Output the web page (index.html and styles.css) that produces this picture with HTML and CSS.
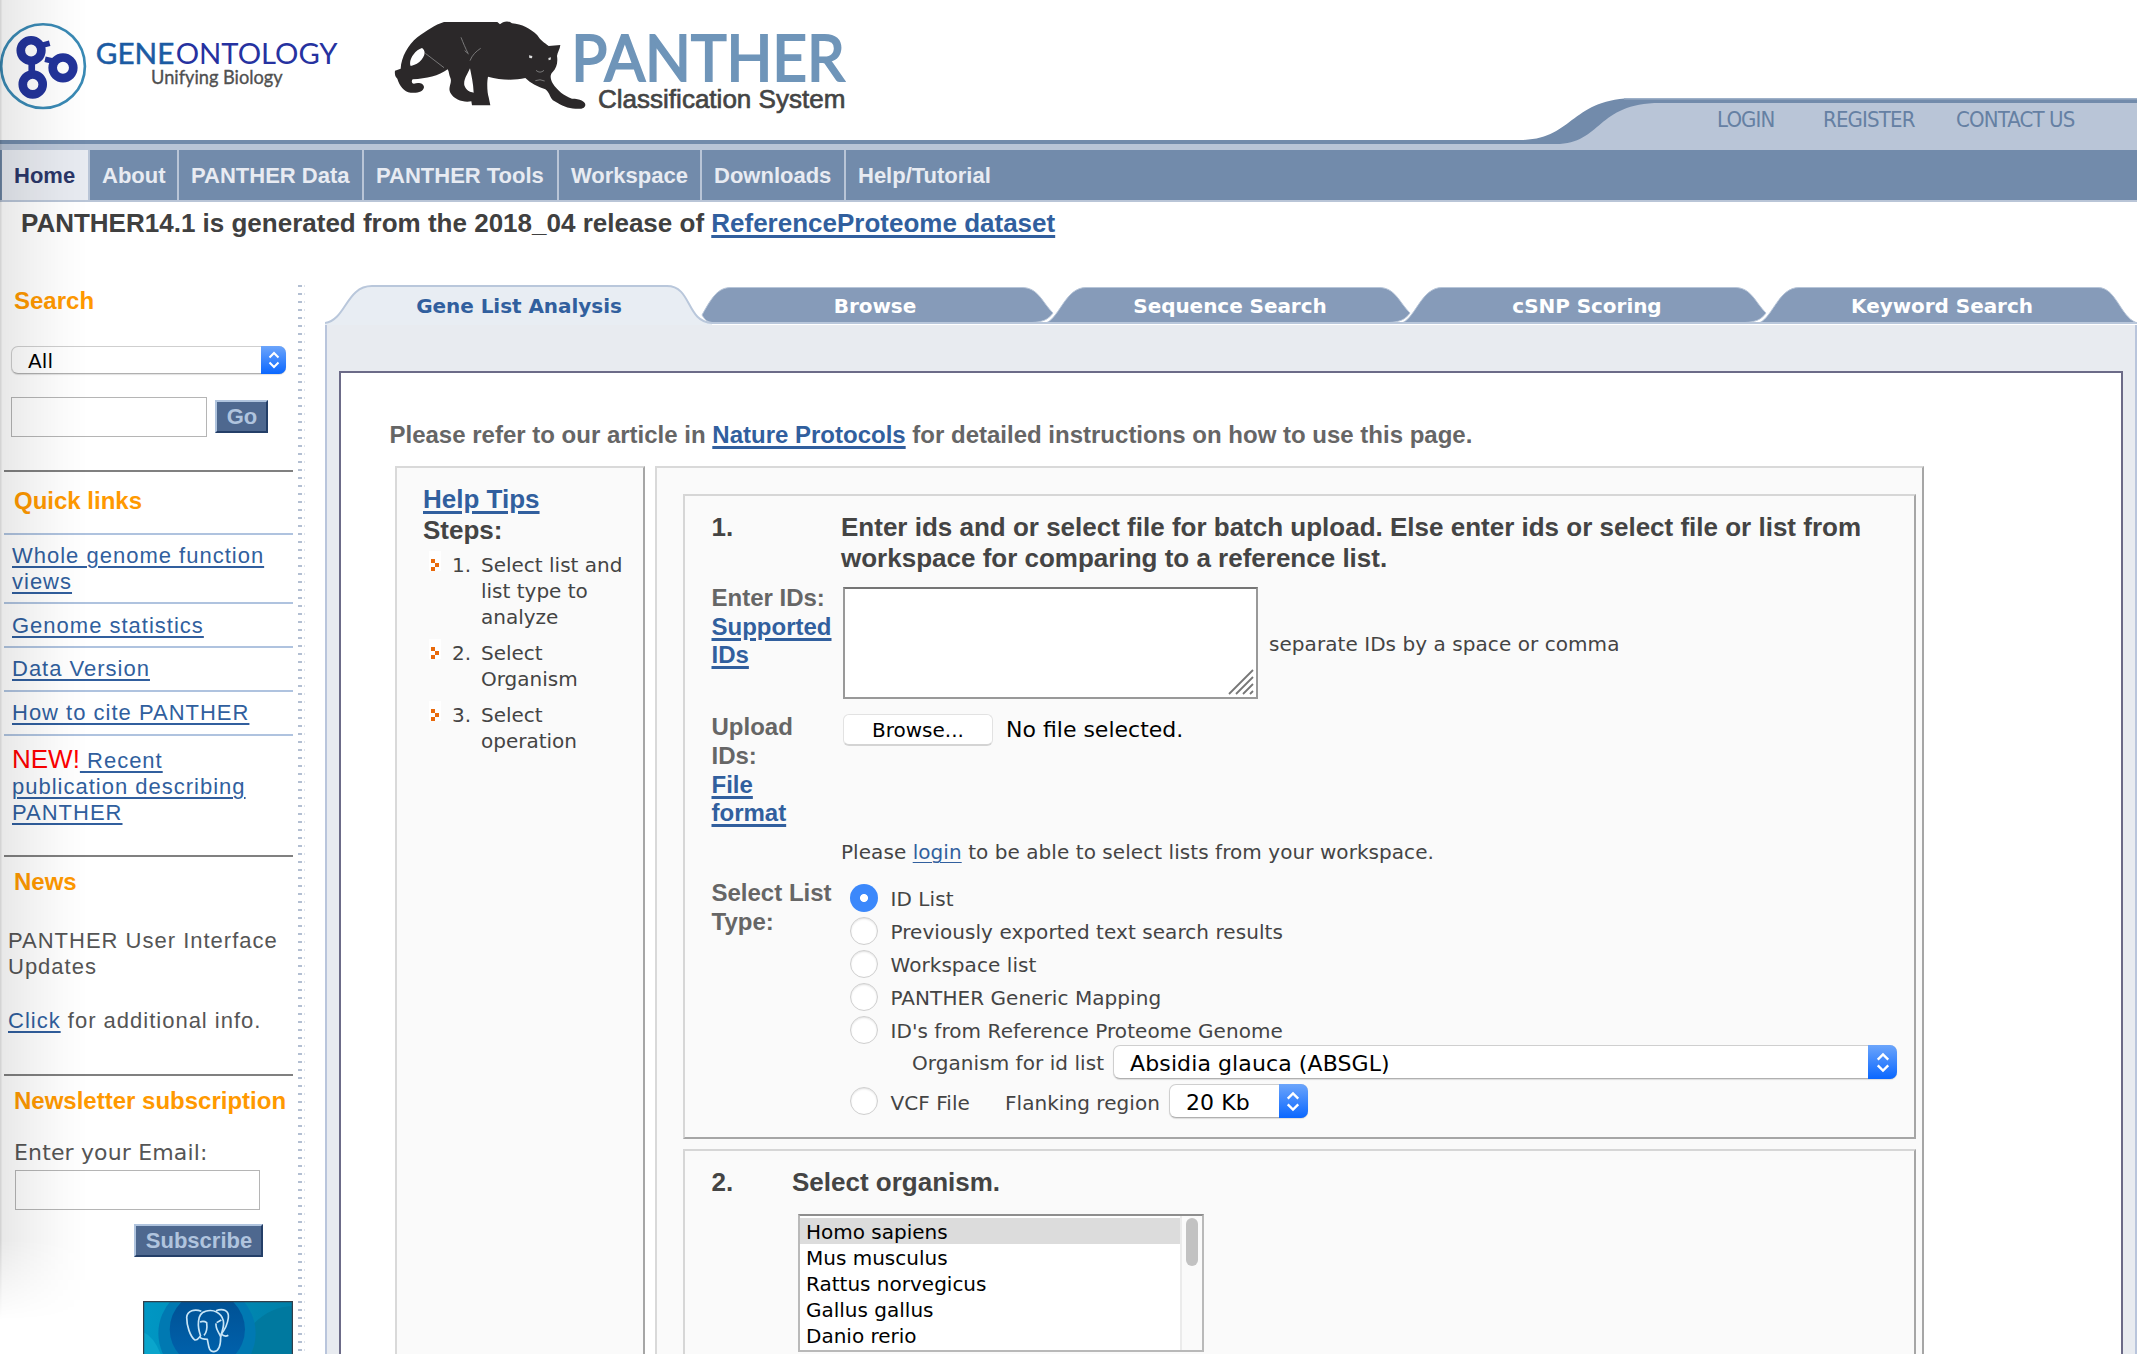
FILE: index.html
```html
<!DOCTYPE html>
<html lang="en">
<head>
<meta charset="utf-8">
<title>PANTHER - Gene List Analysis</title>
<link rel="stylesheet" href="styles.css">
</head>
<body>
<svg class="defs" width="0" height="0" aria-hidden="true">
  <symbol id="updown" viewBox="0 0 12 18"><path d="M1.5 6.5 6 2l4.5 4.5M1.5 11.5 6 16l4.5-4.5" fill="none" stroke="#fff" stroke-width="2"/></symbol>
  <symbol id="bullet" viewBox="0 0 12 20"><path d="M0 0h12v20H0z" fill="#fff"/><path d="M2 8h4v4H2zM6 12h4v4H6zM2 16h4v4H2z" fill="#e8690b"/></symbol>
</svg>
<div class="page">
  <header class="header">
    <svg class="logo-go" viewBox="0 0 1020 340" width="340" height="113">
      <circle cx="128" cy="199" r="126" fill="#fff" stroke="#3a8ab5" stroke-width="8"/>
      <g fill="none" stroke="#23349b" stroke-width="26">
        <circle cx="92" cy="152" r="31"/><circle cx="188" cy="204" r="31"/><circle cx="97" cy="254" r="30"/>
        <path d="M94 186v38" stroke-width="20"/><path d="M118 138l30-8M134 178l26 6" stroke-width="17"/>
      </g>
      <text x="287" y="193" textLength="236" lengthAdjust="spacingAndGlyphs" class="go-gene">GENE</text>
      <text x="527" y="193" textLength="487" lengthAdjust="spacingAndGlyphs" class="go-ont">ONTOLOGY</text>
      <text x="453" y="252" textLength="396" lengthAdjust="spacingAndGlyphs" class="go-sub">Unifying Biology</text>
    </svg>
    <svg class="logo-panther" viewBox="45 66 1365 270" width="455" height="90">
      <path fill="#2b2829" fill-rule="evenodd" d="M45 212L62 206C64 172 84 134 112 112C140 92 165 74 192 66H352L360 73C368 64 386 60 396 70C425 72 452 86 472 106C482 122 492 128 506 138L541 135C540 148 532 158 531 168C534 188 530 204 518 216C508 226 512 238 518 250C532 272 552 288 576 296C600 296 616 304 616 314C616 324 604 328 590 326C566 327 546 318 524 304C508 296 512 280 496 268C474 260 452 250 436 234C400 242 360 240 324 230C320 250 322 280 326 292L331 316H276L274 304C250 308 224 300 212 280C202 262 216 252 212 236C206 224 208 216 203 208C176 228 140 236 98 238C94 242 94 250 102 251C116 246 132 250 132 262C130 276 112 280 92 278C72 276 58 256 52 236C44 230 44 220 45 212ZM92 198C84 182 104 150 126 144C140 154 134 172 118 186C108 194 98 196 92 198ZM270 205C262 224 250 238 253 256C258 272 270 276 281 278C280 250 274 226 270 205Z"/>
      <path d="M136 160L192 203M243 112C250 130 256 144 264 160M254 152L266 162M302 145C288 154 276 166 270 182M468 211Q480 222 492 211M466 242Q480 236 494 243" fill="none" stroke="#888" stroke-width="2.500"/>
      <path d="M447 166l10 2-1 7-8-1zM505 174l8-2-1 7-6 2z" fill="#ddd"/>
      <text x="574" y="244" textLength="820" lengthAdjust="spacingAndGlyphs" class="pa-name">PANTHER</text>
      <text x="654" y="325" textLength="742" lengthAdjust="spacingAndGlyphs" class="pa-sub">Classification System</text>
    </svg>
    <div class="band">
      <svg class="band-curve" width="637" height="52" viewBox="0 0 637 52">
        <path d="M20 42C74 42 70 0 136 0H637V46H0V42Z" fill="#728bab"/>
        <path d="M0 46H56C102 46 96 5 160 5H637V52H0Z" fill="#b9c5d7"/>
        <path d="M124 0.8H637" stroke="#9db0c8" stroke-width="1.5"/>
      </svg>
      <nav class="account"><a>LOGIN</a><a>REGISTER</a><a>CONTACT US</a></nav>
    </div>
  </header>
  <nav class="menu">
    <a class="on m1">Home</a><a class="m2">About</a><a class="m3">PANTHER Data</a><a class="m4">PANTHER Tools</a><a class="m5">Workspace</a><a class="m6">Downloads</a><a>Help/Tutorial</a>
  </nav>
  <div class="notice">PANTHER14.1 is generated from the 2018_04 release of <a>ReferenceProteome dataset</a></div>

  <div class="columns">
    <aside class="side">
      <section class="s-search">
        <h3>Search</h3>
        <div class="select sel-all"><span>All</span><i><svg width="12" height="18"><use href="#updown"/></svg></i></div>
        <div class="search-row"><div class="input q"></div><div class="button go">Go</div></div>
      </section>
      <section class="s-links">
        <h3>Quick links</h3>
        <ul>
          <li class="first"><a>Whole genome function views</a></li>
          <li><a>Genome statistics</a></li>
          <li class="tight"><a>Data Version</a></li>
          <li class="tight"><a>How to cite PANTHER</a></li>
          <li class="recent"><span class="new">NEW!</span><a> Recent publication describing PANTHER</a></li>
        </ul>
      </section>
      <section class="s-news">
        <h3>News</h3>
        <p>PANTHER User Interface Updates</p>
        <p><a>Click</a> for additional info.</p>
      </section>
      <section class="s-mail">
        <h3>Newsletter subscription</h3>
        <div class="mail-label">Enter your Email:</div>
        <div class="input mail"></div>
        <div class="button subscribe">Subscribe</div>
        <svg class="banner" viewBox="429 783 450 160" width="150" height="53.3">
          <defs><linearGradient id="sea"><stop offset="0" stop-color="#0097c4"/><stop offset="1" stop-color="#007fa8"/></linearGradient>
          <linearGradient id="deep" x2="0" y2="1"><stop offset="0" stop-color="#004f91"/><stop offset="1" stop-color="#0064b0"/></linearGradient></defs>
          <path d="M429 783h450v160H429z" fill="url(#sea)"/>
          <path d="M429 876Q462 890 482 943H429z" fill="#0aa5cc"/>
          <path d="M745 870Q800 800 879 798V943H745z" fill="#00799f"/>
          <circle cx="621" cy="880" r="146" fill="#0079b2"/>
          <circle cx="622" cy="868" r="113" fill="url(#deep)"/>
          <g fill="none" stroke="#c9e6f7" stroke-width="5" stroke-linejoin="round">
            <path d="M604 814C584 806 562 812 560 832C560 858 570 888 584 900C594 902 596 892 602 888"/>
            <path d="M602 888C592 862 590 820 616 814C640 806 664 818 670 842C674 862 664 876 662 892C662 914 658 934 642 935C626 936 626 918 622 898C614 896 602 900 600 890"/>
            <path d="M648 812C670 804 688 812 685 834C682 856 672 872 664 882Q674 892 685 886M648 850C646 866 656 876 662 890M600 846Q612 842 620 848C622 864 622 876 612 886M650 848L664 840"/>
          </g>
          <path d="M430.500 943V784.500H877.500V943" fill="none" stroke="#333f4a" stroke-width="4"/>
        </svg>
      </section>
    </aside>
    <div class="dots"></div>
    <main class="main">
      <nav class="tabs">
        <svg class="tab-shapes" width="1812" height="40" viewBox="325 285 1812 40">
          <g fill="#869bb9" stroke="#b7c5d8" stroke-width="1">
            <path d="M702 315C712 297 718 287.500 731 287.500H1022C1038 287.500 1042 302 1053 313C1048 320 1042 322 1032 322.500H712C706 322 704 318 702 315Z"/>
            <path d="M1047 322.500C1060 316 1066 287.500 1086 287.500H1379C1395 287.500 1399 302 1410 313C1405 320 1399 322 1389 322.500Z"/>
            <path d="M1403 322.500C1416 316 1422 287.500 1442 287.500H1735C1751 287.500 1755 302 1766 313C1761 320 1755 322 1745 322.500Z"/>
            <path d="M1760 322.500C1773 316 1779 287.500 1799 287.500H2098C2116 287.500 2120 316 2136 322.500Z"/>
          </g>
          <path d="M325 323C346 320 346 286 372 286H667C692 286 686 322 712 323V325H325Z" fill="#e8edf3"/>
          <path d="M325 323C346 320 346 286 372 286H667C692 286 686 322 712 323H2137" fill="none" stroke="#b9c7db" stroke-width="2"/>
        </svg>
        <a class="t1 on">Gene List Analysis</a><a class="t2">Browse</a><a class="t3">Sequence Search</a><a class="t4">cSNP Scoring</a><a class="t5">Keyword Search</a>
      </nav>
      <div class="panel"><div class="sheet">
        <div class="refer">Please refer to our article in <a>Nature Protocols</a> for detailed instructions on how to use this page.</div>
        <div class="work">
          <div class="help">
            <a class="tips">Help Tips</a>
            <div class="steps">Steps:</div>
            <ol>
              <li><svg width="12" height="20"><use href="#bullet"/></svg><span>1.</span><span>Select list and list type to analyze</span></li>
              <li><svg width="12" height="20"><use href="#bullet"/></svg><span>2.</span><span>Select Organism</span></li>
              <li><svg width="12" height="20"><use href="#bullet"/></svg><span>3.</span><span>Select operation</span></li>
            </ol>
          </div>
          <div class="form">
            <div class="box box1">
              <div class="row title"><div>1.</div><div>Enter ids and or select file for batch upload. Else enter ids or select file or list from workspace for comparing to a reference list.</div></div>
              <div class="row ids">
                <div class="label">Enter IDs:<a>Supported IDs</a></div>
                <div class="ids-field">
                  <div class="textarea"><svg width="26" height="26" viewBox="0 0 26 26"><path d="M1 25 25 1M8 25 25 8M15 25 25 15M22 25l3-3" stroke="#777" stroke-width="1.800"/></svg></div>
                  <span>separate IDs by a space or comma</span>
                </div>
              </div>
              <div class="row upload">
                <div class="label">Upload IDs:<a>File format</a></div>
                <div class="file"><span class="browse">Browse...</span><span>No file selected.</span></div>
              </div>
              <div class="row login"><div></div><div>Please <a>login</a> to be able to select lists from your workspace.</div></div>
              <div class="row types">
                <div class="label">Select List Type:</div>
                <div class="radios">
                  <div class="opt"><b class="radio checked"></b><span>ID List</span></div>
                  <div class="opt"><b class="radio"></b><span>Previously exported text search results</span></div>
                  <div class="opt"><b class="radio"></b><span>Workspace list</span></div>
                  <div class="opt"><b class="radio"></b><span>PANTHER Generic Mapping</span></div>
                  <div class="opt"><b class="radio"></b><span>ID's from Reference Proteome Genome</span></div>
                  <div class="org"><span>Organism for id list</span><div class="select big"><span>Absidia glauca (ABSGL)</span><i><svg width="14" height="21"><use href="#updown"/></svg></i></div></div>
                  <div class="opt vcf"><b class="radio"></b><span>VCF File</span><span class="flank">Flanking region</span><div class="select kb"><span>20 Kb</span><i><svg width="14" height="21"><use href="#updown"/></svg></i></div></div>
                </div>
              </div>
            </div>
            <div class="box box2">
              <div class="title2"><div>2.</div><div>Select organism.</div></div>
              <div class="listbox">
                <ul><li class="sel">Homo sapiens</li><li>Mus musculus</li><li>Rattus norvegicus</li><li>Gallus gallus</li><li>Danio rerio</li></ul>
                <div class="track"><div class="thumb"></div></div>
              </div>
            </div>
          </div>
        </div>
      </div></div>
    </main>
  </div>
  <div class="edge-shade"></div>
</div>
</body>
</html>
```

FILE: styles.css
```css
* { box-sizing: border-box; }
html, body { margin: 0; overflow: hidden; }
body { background: #fff; font-family: "Liberation Sans", Arial, sans-serif; font-size: 22px; color: #444; }
h3, p, ul, ol { margin: 0; padding: 0; list-style: none; }
a { color: #315f9e; text-decoration: underline; text-decoration-thickness: 2px; text-underline-offset: 3px; }
svg { display: block; }
.defs { position: absolute; }
.page { position: relative; width: 2142px; height: 1354px; overflow: hidden; }

/* header */
.header { position: relative; display: flex; height: 150px; }
.logo-go { flex: none; margin-right: 55px; }
.logo-panther { flex: none; margin-top: 22px; overflow: visible; }
.go-gene { font: 400 87px Lato, sans-serif; fill: #1b5ba3; stroke: #1b5ba3; stroke-width: 1.5px; }
.go-ont { font: 400 87px Lato, sans-serif; fill: #2632a0; }
.go-sub { font: 400 56px Lato, sans-serif; fill: #505050; stroke: #505050; stroke-width: 1px; }
.pa-name { font: 400 189px Lato, sans-serif; fill: #6f95b9; stroke: #6f95b9; stroke-width: 6px; }
.pa-sub { font: 400 80px "Liberation Sans", sans-serif; fill: #444; stroke: #444; stroke-width: 2px; }
.band { position: absolute; left: 0; top: 98px; z-index: -1; width: 2137px; height: 52px; background: linear-gradient(#fff 42px, #728bab 42px, #728bab 46px, #b9c5d7 46px); }
.band-curve { position: absolute; left: 1500px; top: 0; }
.account { position: absolute; left: 1717px; top: 7px; display: flex; font: 22px/30px "DejaVu Sans Condensed", "DejaVu Sans", sans-serif; font-stretch: condensed; letter-spacing: -0.85px; }
.account a { color: #6580a3; text-decoration: none; white-space: nowrap; }
.account a:nth-child(1) { width: 106px; }
.account a:nth-child(2) { width: 133px; }

.menu { display: flex; width: 2137px; height: 52px; padding-left: 2px; background: #728bab; border-bottom: 2px solid #b9c5d7; font-weight: bold; font-size: 22px; line-height: 51px; }
.menu a { height: 50px; padding-left: 12px; color: #e8ebf2; text-decoration: none; white-space: nowrap; border-right: 2px solid #b9c5d7; }
.menu a:last-child { border: 0; }
.menu .on { background: #e8ebf1; color: #2b3668; }
.menu .m1 { width: 88px; }
.menu .m2 { width: 89px; }
.menu .m3 { width: 185px; }
.menu .m4 { width: 195px; }
.menu .m5 { width: 143px; }
.menu .m6 { width: 144px; }
.notice { height: 83px; padding: 1px 0 0 21px; font-size: 26px; line-height: 40px; font-weight: bold; color: #404040; white-space: nowrap; }
.notice a { text-decoration-thickness: 3px; }

.columns { display: flex; height: 1069px; }

/* sidebar */
.side { width: 298px; padding-left: 4px; letter-spacing: 1px; line-height: 26px; color: #555; }
.side h3 { padding-left: 10px; font-size: 24px; line-height: 30px; color: #ff9900; letter-spacing: 0; }
.side section { width: 289px; border-top: 2px solid #808080; }
.side .s-search { height: 185px; border: 0; padding-top: 1px; }
.s-links { height: 385px; padding-top: 14px; }
.s-links ul { margin-top: 17px; }
.s-links li { border-top: 2px solid #afc3df; padding: 9px 0 7px 8px; }
.s-links .first { padding-top: 8px; }
.s-links .tight { padding: 8px 0 8px 8px; }
.s-links .recent { padding-top: 8px; padding-right: 30px; }
.new { font-size: 26px; line-height: 30px; color: #f00; letter-spacing: 0; }
.s-news { height: 219px; padding-top: 10px; }
.s-news p { padding-left: 4px; margin-top: 28px; }
.s-news h3 + p { margin-top: 31px; }
.s-mail { padding-top: 10px; }
.input { border: 1px solid #b5b5b5; background: #fff; height: 40px; }
.sel-all { width: 275px; height: 28px; margin: 30px 0 23px 7px; }
.search-row { display: flex; gap: 8px; padding-left: 7px; align-items: flex-start; }
.q { width: 196px; }
.button { height: 33px; border: 2px solid; border-color: #b0c4de #243f68 #243f68 #b0c4de; background: #4e688f; color: #b0c4de; font-weight: bold; font-size: 22px; line-height: 29px; text-align: center; letter-spacing: 0; }
.go { width: 53px; margin-top: 3px; padding-left: 1px; }
.mail-label { margin: 23px 0 3px 10px; font: 22px/28px "DejaVu Sans", sans-serif; letter-spacing: 0.15px; }
.mail { width: 245px; margin-left: 11px; }
.subscribe { width: 129px; margin: 14px 0 0 130px; padding-left: 1px; }
.banner { margin: 44px 0 0 139px; }

.select { display: flex; background: #fff; border: 1px solid #cfcfcf; border-bottom-color: #b0b0b0; border-radius: 7px; box-shadow: 0 1px 1px rgba(0,0,0,.12); font: 22px/35px "DejaVu Sans", sans-serif; letter-spacing: 0.1px; color: #000; }
.select > span { flex: 1; padding-left: 16px; white-space: nowrap; }
.select i { display: flex; align-items: center; justify-content: center; width: 29px; margin: -1px; border-radius: 0 7px 7px 0; background: linear-gradient(#6ca5fb, #0a67ff); }
.select.sel-all { font-size: 20px; line-height: 28px; }
.sel-all i { width: 25px; }

.dots { width: 27px; background: repeating-linear-gradient(#b3bfd2 0 2px, transparent 2px 8px) 0 0 / 4px 8px repeat-y, repeating-linear-gradient(#dde3ec 0 2px, transparent 2px 8px) 6px 0 / 1px 8px repeat-y; }

/* tabs and panel */
.main { width: 1812px; }
.tabs { position: relative; display: flex; height: 40px; font: bold 20px/42px "DejaVu Sans", sans-serif; }
.tab-shapes { position: absolute; left: 0; top: 0; z-index: -1; }
.tabs a { color: #fff; text-decoration: none; text-align: center; white-space: nowrap; letter-spacing: -0.05px; }
.tabs .on { color: #315f9e; }
.t1 { width: 388px; }
.t2 { width: 324px; }
.t3 { width: 386px; }
.t4 { width: 328px; }
.t5 { width: 382px; }
.panel { height: 1029px; padding: 46px 12px 0 12px; border: solid #b9c5dc; border-width: 0 2px; background: #e8ebf0; }
.sheet { height: 983px; padding: 0 0 0 48px; border: 2px solid #6c6b88; border-bottom: 0; background: #fff; }
.refer { padding: 47px 0 0 0.5px; height: 93px; font-size: 24px; font-weight: bold; line-height: 30px; color: #666; white-space: nowrap; }
.refer a, .label a { text-decoration-thickness: 3px; }
.work { display: flex; gap: 10px; margin-left: 6px; height: 888px; }
.help { width: 250px; padding: 16px 10px 0 26px; border: 2px solid #d9d9d9; border-right-color: #a6a6a6; border-bottom: 0; background: #fafafa; }
.tips, .steps { display: block; font-size: 26px; line-height: 30px; font-weight: bold; text-decoration-thickness: 3px; }
.steps { line-height: 32px; color: #444; }
.help ol { margin-top: 6px; font: 20px/26px "DejaVu Sans", sans-serif; color: #444; }
.help li { display: grid; grid-template-columns: 12px 40px 1fr; padding-left: 6px; margin-bottom: 10px; }
.help li span:nth-child(2) { padding-left: 11px; white-space: nowrap; }
.help li svg { margin-top: -1px; }
.form { width: 1269px; padding: 26px 6px 0 26px; border: 2px solid #d9d9d9; border-right-color: #a6a6a6; border-bottom: 0; background: #fafafa; }
.box { border: 2px solid; border-color: #d6d6d6 #a6a6a6 #a6a6a6 #d6d6d6; padding-left: 26.5px; }
.box1 { height: 645px; padding-top: 16px; margin-bottom: 10px; font: 20px/26px "DejaVu Sans", sans-serif; letter-spacing: 0.06px; }
.box2 { height: 240px; padding-top: 16px; }
.row { display: grid; grid-template-columns: 129.5px 1fr; }
.title, .title2 { font: bold 26px/31px "Liberation Sans", sans-serif; color: #444; letter-spacing: 0; }
.title { height: 71px; padding-right: 20px; }
.label { font: bold 24px/29px "Liberation Sans", sans-serif; color: #666; width: 125px; letter-spacing: 0; }
.label a { display: block; line-height: 28px; }
.ids { height: 129px; }
.ids .label a { margin-top: 1px; }
.ids-field { display: flex; align-items: center; gap: 11px; height: 112px; margin: 4px 0 0 2px; }
.ids-field span { padding-top: 2px; }
.textarea { display: flex; align-items: flex-end; justify-content: flex-end; width: 415px; height: 112px; padding: 2px; border: 2px solid #999; border-top-color: #757575; background: #fff; }
.upload { height: 127px; }
.upload .label { width: 100px; }
.upload .label a { margin-top: 1px; }
.file { display: flex; gap: 13px; height: 32px; margin: 2px 0 0 2px; font-size: 22px; line-height: 32px; color: #000; letter-spacing: 0; }
.browse { width: 150px; height: 32px; font-size: 20px; line-height: 30px; padding-left: 28px; border: 1px solid #e2e2e2; border-bottom: 2px solid #d4d4d4; border-radius: 6px; background: #fff; }
.login { height: 39px; }
.login a { text-decoration-thickness: 1px; }
.radios { padding: 3px 0 0 9px; }
.opt { display: flex; align-items: center; height: 33px; white-space: nowrap; }
.opt > span { padding: 3px 0 0 13px; }
.radio { width: 28px; height: 28px; border: 1px solid #cfcfcf; border-radius: 50%; background: #fff; box-shadow: inset 0 1px 2px rgba(0,0,0,.12); }
.opt > .radio + span { padding-left: 12.5px; }
.radio.checked { border: 0; background: radial-gradient(circle, #fff 3.600px, #3b88fb 4.400px); box-shadow: none; }
.org { display: flex; height: 34px; margin-top: -1px; padding-left: 62px; line-height: 36px; white-space: nowrap; }
.big { width: 784px; height: 34px; margin-left: 9px; }
.opt.vcf { height: 34px; margin-top: 5px; }
.opt .flank { padding-left: 35px; }
.kb { width: 139px; height: 34px; margin-left: 9px; }
.title2 { display: flex; height: 47px; }
.title2 div:first-child { width: 80.5px; }
.listbox { display: flex; width: 406px; height: 138px; margin-left: 86.5px; border: 2px solid #b9b9b9; border-top-color: #8e8e8e; background: #fff; }
.listbox ul { width: 380px; padding-top: 2px; font: 20px/26px "DejaVu Sans", sans-serif; color: #000; }
.listbox li { height: 26px; padding-left: 6px; line-height: 28px; }
.listbox .sel { background: #dcdcdc; }
.track { flex: 1; padding: 2px 0 0 4px; border-left: 2px solid #ebebeb; background: #fafafa; }
.thumb { width: 12px; height: 48px; border-radius: 6px; background: #c2c2c2; }

/* soft shade along the left window edge */
.edge-shade { position: absolute; left: 0; top: 0; width: 90px; height: 1354px; pointer-events: none; background: linear-gradient(90deg, rgba(0,0,0,.17) 0 1px, rgba(0,0,0,.09) 2px, rgba(0,0,0,.06) 25px, rgba(0,0,0,.02) 60px, transparent 88px); -webkit-mask-image: linear-gradient(#000 1240px, transparent 1320px); mask-image: linear-gradient(#000 1240px, transparent 1320px); }
```
